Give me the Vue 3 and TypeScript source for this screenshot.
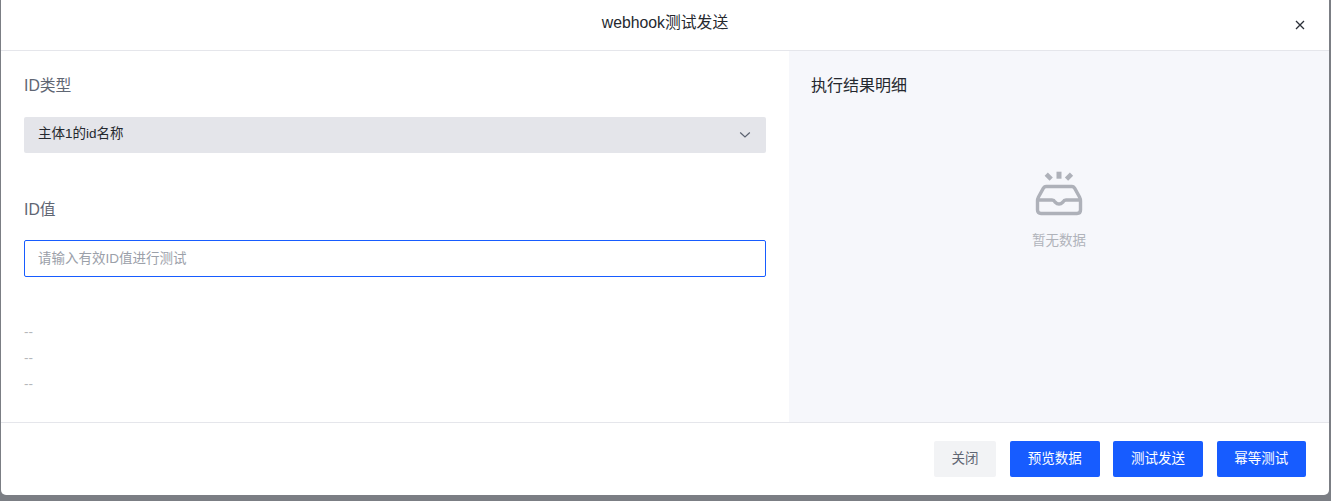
<script setup lang="ts">
const placeholderRows: string[] = ['--', '--', '--']
const actions: string[] = ['预览数据', '测试发送', '幂等测试']
</script>

<template>
  <div class="page">
    <div class="modal">
      <header class="head">
        <span class="title">webhook测试发送</span>
        <button class="close" type="button" aria-label="关闭">
          <svg width="10" height="10" viewBox="0 0 10 10">
            <path d="M1 1 L9 9 M9 1 L1 9" stroke="#2b2f38" stroke-width="1.3" fill="none" />
          </svg>
        </button>
      </header>
      <main class="body">
        <section class="left">
          <div class="label">ID类型</div>
          <div class="select">
            <span class="select-text">主体1的id名称</span>
            <svg width="12" height="8" viewBox="0 0 12 8">
              <path d="M1.2 1.5 L6 6 L10.8 1.5" stroke="#5b6270" stroke-width="1.2" fill="none" />
            </svg>
          </div>
          <div class="label second">ID值</div>
          <input class="input" type="text" placeholder="请输入有效ID值进行测试" />
          <div class="rows">
            <div v-for="(row, i) in placeholderRows" :key="i" class="row">{{ row }}</div>
          </div>
        </section>
        <aside class="right">
          <div class="result-title">执行结果明细</div>
          <div class="empty">
            <svg width="48" height="48" viewBox="0 0 48 48" fill="none">
              <path d="M11 16.5 H37 Q38.5 16.5 39.5 18 L44.5 27 Q45.5 29 45.5 31 V40 Q45.5 43.5 42 43.5 H6 Q2.5 43.5 2.5 40 V31 Q2.5 29 3.5 27 L8.5 18 Q9.5 16.5 11 16.5 Z" stroke="#aeb1b9" stroke-width="3.4" />
              <path d="M3 30 H17 Q19 30 20 32 Q22 34 24 34 Q26 34 28 32 Q29 30 31 30 H45" stroke="#aeb1b9" stroke-width="3.4" />
              <rect x="21.5" y="1.7" width="5" height="7" fill="#aeb1b9" />
              <rect x="11.4" y="3.2" width="4.6" height="7" fill="#aeb1b9" transform="rotate(-45 13.7 6.7)" />
              <rect x="31.7" y="3.2" width="4.6" height="7" fill="#aeb1b9" transform="rotate(45 34 6.7)" />
            </svg>
            <div class="empty-text">暂无数据</div>
          </div>
        </aside>
      </main>
      <footer class="foot">
        <button class="btn ghost" type="button">关闭</button>
        <button v-for="a in actions" :key="a" class="btn primary" type="button">{{ a }}</button>
      </footer>
    </div>
  </div>
</template>

<style>
html, body { margin: 0; padding: 0; background: #7b7e84; overflow: hidden; }
</style>

<style scoped>
.page {
  box-sizing: border-box;
  width: 1331px;
  height: 501px;
  padding: 0 2px 6px 1px;
  background: #7b7e84;
  font-family: "Liberation Sans", "Noto Sans CJK SC", sans-serif;
}
.modal {
  height: 100%;
  display: flex;
  flex-direction: column;
  background: #fff;
  border-radius: 0 0 5px 5px;
  overflow: hidden;
}
.head {
  position: relative;
  flex: 0 0 51px;
  box-sizing: border-box;
  display: flex;
  align-items: center;
  justify-content: center;
  padding-bottom: 5px;
  border-bottom: 1px solid #e5e6eb;
}
.title { font-size: 15.8px; line-height: 22px; color: #25282e; }
.close {
  position: absolute;
  right: 24px;
  top: 20px;
  width: 10px;
  height: 10px;
  padding: 0;
  border: 0;
  background: none;
  display: flex;
}
.body { flex: 1; display: flex; min-height: 0; }
.left {
  box-sizing: border-box;
  width: 788px;
  padding: 21px 23px 0;
}
.label { font-size: 15.8px; line-height: 28px; color: #5f6673; }
.second { margin-top: 43px; }
.select {
  display: flex;
  align-items: center;
  justify-content: space-between;
  box-sizing: border-box;
  height: 36px;
  margin-top: 17px;
  padding: 0 15px 0 14px;
  background: #e4e5ea;
  border-radius: 2px;
  font-size: 13.5px;
  color: #25282e;
}
.select-text { line-height: 20px; margin-bottom: 2px; }
.input {
  display: block;
  box-sizing: border-box;
  width: 100%;
  height: 37px;
  margin-top: 16px;
  padding: 0 13px;
  border: 1px solid #175cff;
  border-radius: 2px;
  outline: none;
  font: inherit;
  font-size: 13.5px;
  color: #25282e;
}
.input::placeholder { color: #9ba0a9; opacity: 1; }
.rows { margin-top: 42px; }
.row { font-size: 13.5px; line-height: 26px; color: #b4b6ba; }
.right {
  flex: 1;
  background: #f6f7fb;
  padding: 21px 22px 0;
}
.result-title { font-size: 16px; line-height: 28px; color: #25282e; }
.empty {
  display: flex;
  flex-direction: column;
  align-items: center;
  margin-top: 70px;
}
.empty-text { margin-top: 11px; font-size: 13.5px; line-height: 24px; color: #b0b3ba; }
.foot {
  flex: 0 0 73px;
  box-sizing: border-box;
  display: flex;
  justify-content: flex-end;
  align-items: flex-start;
  gap: 13.75px;
  padding: 18px 23px 0 0;
  border-top: 1px solid #e5e6eb;
}
.btn {
  height: 36px;
  padding: 0 17.75px 4px;
  border: 0;
  border-radius: 2px;
  font: inherit;
  font-size: 13.5px;
}
.ghost { background: #f2f3f5; color: #5f6673; }
.primary { background: #175cff; color: #fff; }
</style>
